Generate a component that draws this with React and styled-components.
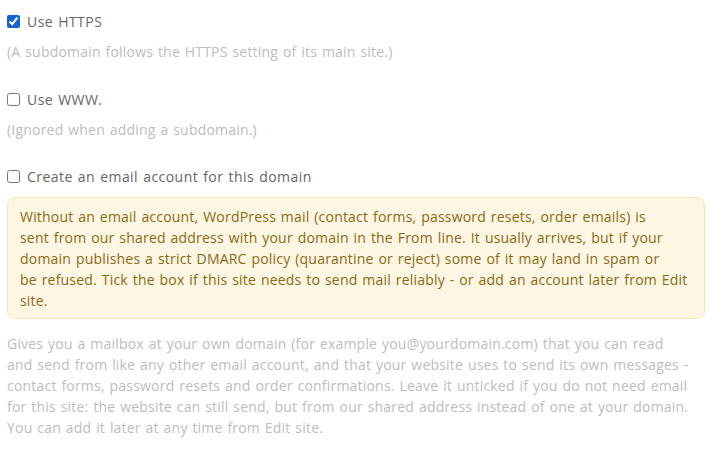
import React from "react";
import styled, { createGlobalStyle } from "styled-components";

const Global = createGlobalStyle`
  html, body { margin: 0; padding: 0; background: #fff; }
  body { font-family: "Open Sans", "Liberation Sans", sans-serif; }
`;

const Page = styled.div`
  padding: 11px 8px 0 7px;
  font-size: 14px;
  letter-spacing: 0.2px;
  word-spacing: 1px;
`;

const Field = styled.div`
  margin-bottom: ${(p) => p.$gap ?? 27}px;
`;

const CheckRow = styled.label`
  display: flex;
  align-items: center;
  gap: 7px;
  height: 21px;
  line-height: 21px;
  color: #666;
  letter-spacing: 0.45px;
  cursor: pointer;
`;

const Check = styled.input.attrs({ type: "checkbox" })`
  width: 13px;
  height: 13px;
  margin: 0;
  accent-color: #1463d0;
`;

const Help = styled.div`
  margin-top: 9px;
  line-height: 21px;
  color: #bdbdbd;
`;

const Notice = styled.div`
  margin-top: 10px;
  padding: 8px 8px 7px 12px;
  background: #fdf6e2;
  border: 1px solid #f6e7bb;
  border-radius: 8px;
  color: #8a6a16;
  line-height: 21px;
  white-space: nowrap;
`;

const Desc = styled.p`
  margin: 14px 0 0;
  line-height: 21px;
  color: #bdbdbd;
  white-space: nowrap;
`;

export default function App() {
  return (
    <>
      <Global />
      <Page>
        <Field>
          <CheckRow>
            <Check defaultChecked />
            Use HTTPS
          </CheckRow>
          <Help>(A subdomain follows the HTTPS setting of its main site.)</Help>
        </Field>
        <Field $gap={26}>
          <CheckRow>
            <Check />
            Use WWW.
          </CheckRow>
          <Help>(Ignored when adding a subdomain.)</Help>
        </Field>
        <Field $gap={0}>
          <CheckRow>
            <Check />
            Create an email account for this domain
          </CheckRow>
          <Notice>
            Without an email account, WordPress mail (contact forms, password resets, order emails) is<br />
            sent from our shared address with your domain in the From line. It usually arrives, but if your<br />
            domain publishes a strict DMARC policy (quarantine or reject) some of it may land in spam or<br />
            be refused. Tick the box if this site needs to send mail reliably - or add an account later from Edit<br />
            site.
          </Notice>
          <Desc>
            Gives you a mailbox at your own domain (for example you@yourdomain.com) that you can read<br />
            and send from like any other email account, and that your website uses to send its own messages -<br />
            contact forms, password resets and order confirmations. Leave it unticked if you do not need email<br />
            for this site: the website can still send, but from our shared address instead of one at your domain.<br />
            You can add it later at any time from Edit site.
          </Desc>
        </Field>
      </Page>
    </>
  );
}
